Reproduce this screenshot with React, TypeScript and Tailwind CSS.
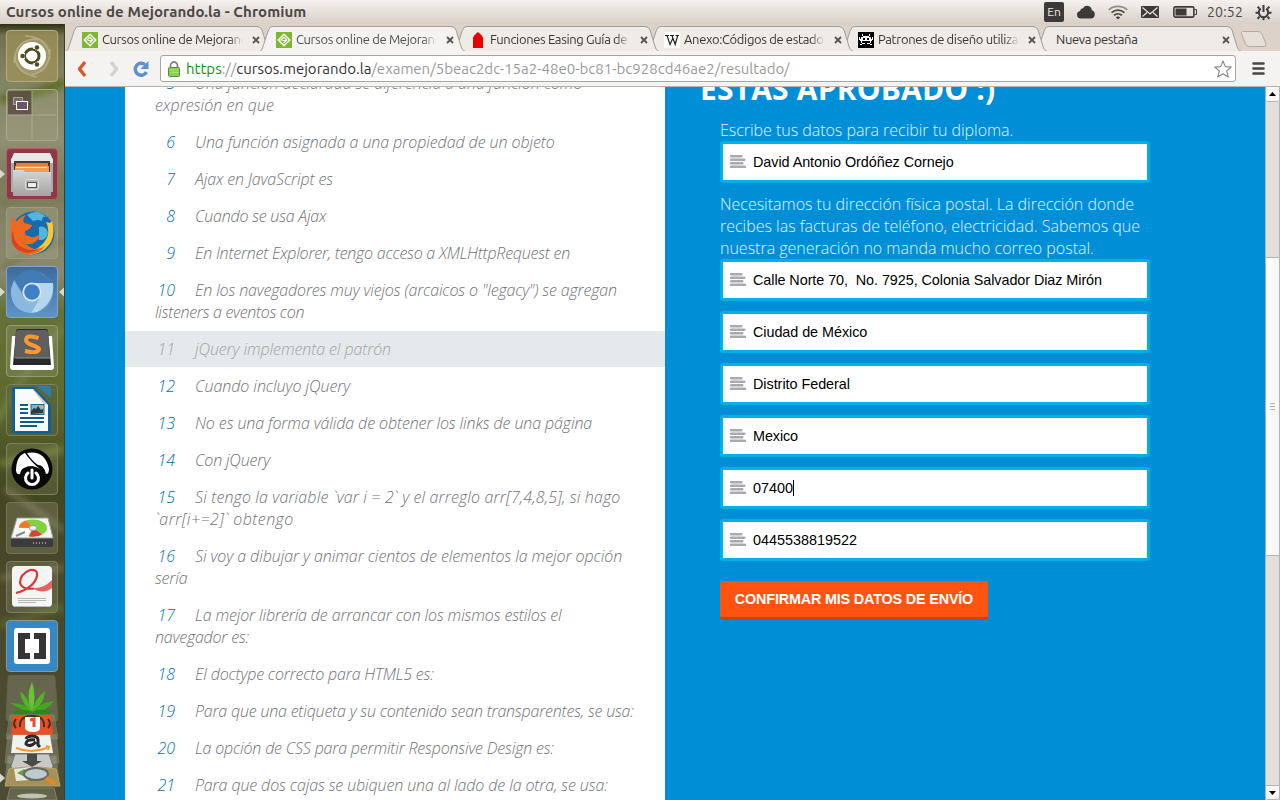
import type { ReactNode } from "react";

type Line = { text: string; spacing: string };

const questions: { n: number; lines: Line[]; muted?: boolean }[] = [
  {
    n: 5,
    lines: [
      { text: "Una función declarada se diferencia a una función como", spacing: "tracking-[-0.09px]" },
      { text: "expresión en que", spacing: "tracking-[0.05px]" },
    ],
  },
  { n: 6, lines: [{ text: "Una función asignada a una propiedad de un objeto", spacing: "tracking-[-0.08px]" }] },
  { n: 7, lines: [{ text: "Ajax en JavaScript es", spacing: "tracking-[-0.13px]" }] },
  { n: 8, lines: [{ text: "Cuando se usa Ajax", spacing: "tracking-[-0.22px]" }] },
  { n: 9, lines: [{ text: "En Internet Explorer, tengo acceso a XMLHttpRequest en", spacing: "tracking-[-0.24px]" }] },
  {
    n: 10,
    lines: [
      { text: 'En los navegadores muy viejos (arcaicos o "legacy") se agregan', spacing: "tracking-[-0.15px]" },
      { text: "listeners a eventos con", spacing: "tracking-[-0.3px]" },
    ],
  },
  { n: 11, lines: [{ text: "jQuery implementa el patrón", spacing: "tracking-[-0.1px]" }], muted: true },
  { n: 12, lines: [{ text: "Cuando incluyo jQuery", spacing: "tracking-[-0.05px]" }] },
  { n: 13, lines: [{ text: "No es una forma válida de obtener los links de una página", spacing: "tracking-[-0.11px]" }] },
  { n: 14, lines: [{ text: "Con jQuery", spacing: "tracking-[-0.18px]" }] },
  {
    n: 15,
    lines: [
      { text: "Si tengo la variable `var i = 2` y el arreglo arr[7,4,8,5], si hago", spacing: "tracking-[0.13px]" },
      { text: "`arr[i+=2]` obtengo", spacing: "tracking-[0.42px]" },
    ],
  },
  {
    n: 16,
    lines: [
      { text: "Si voy a dibujar y animar cientos de elementos la mejor opción", spacing: "tracking-[-0.08px]" },
      { text: "sería", spacing: "tracking-[-0.2px]" },
    ],
  },
  {
    n: 17,
    lines: [
      { text: "La mejor librería de arrancar con los mismos estilos el", spacing: "tracking-[-0.14px]" },
      { text: "navegador es:", spacing: "tracking-[-0.2px]" },
    ],
  },
  { n: 18, lines: [{ text: "El doctype correcto para HTML5 es:", spacing: "tracking-[-0.18px]" }] },
  { n: 19, lines: [{ text: "Para que una etiqueta y su contenido sean transparentes, se usa:", spacing: "tracking-[-0.2px]" }] },
  { n: 20, lines: [{ text: "La opción de CSS para permitir Responsive Design es:", spacing: "tracking-[-0.19px]" }] },
  { n: 21, lines: [{ text: "Para que dos cajas se ubiquen una al lado de la otra, se usa:", spacing: "tracking-[-0.12px]" }] },
];

function TopBar() {
  return (
    <header className="flex h-6 shrink-0 items-center justify-between bg-linear-to-b from-[#f4f2ef] to-[#d9cfc6] pr-[8px] pl-[6px] text-[#4b4845]">
      <h1 className="text-[15px] leading-6 font-bold tracking-[0.1px] whitespace-nowrap">
        Cursos online de Mejorando.la - Chromium
      </h1>
      <div className="flex items-center">
        <span className="flex h-5 w-5 items-center justify-center rounded-[2px] bg-[#3c3b39] text-[12px] leading-5 text-[#eeeae6]">En</span>
        <svg className="ml-[13px]" width="18" height="14" viewBox="0 0 18 14" fill="#3c3b39">
          <path d="M4 13.5a3.800 3.800 0 0 1-1-7.500A3.400 3.400 0 0 1 6 3.200 4.700 4.700 0 0 1 14.800 5.300 4.200 4.200 0 0 1 14 13.5Z" />
        </svg>
        <svg className="ml-[13px]" width="20" height="15" viewBox="0 0 20 15" fill="none" strokeWidth="1.700">
          <path d="M.8 4.800C5.500.2 14.500.2 19.200 4.800" stroke="#8e8a86" />
          <path d="M3.500 7.700C7.200 4.300 12.800 4.300 16.500 7.700" stroke="#4b4845" />
          <path d="M6 10.300C8.300 8.300 11.700 8.300 14 10.300" stroke="#4b4845" />
          <path d="M7.800 12.200 10 14.500l2.200-2.300Q10 10.800 7.800 12.200Z" fill="#3c3b39" />
        </svg>
        <svg className="ml-[13px]" width="18" height="12" viewBox="0 0 18 12">
          <rect width="18" height="12" rx="0.8" fill="#3c3b39" />
          <path d="M1.500 1.500 9 8l7.500-6.500M1.500 10.500l4.500-4M16.500 10.500l-4.500-4" fill="none" stroke="#e8e4df" strokeWidth="1.200" />
        </svg>
        <svg className="ml-[14px]" width="24" height="12" viewBox="0 0 24 12">
          <rect x="0.9" y="0.9" width="20" height="10.200" rx="1.500" fill="none" stroke="#3c3b39" strokeWidth="1.600" />
          <rect x="2.500" y="2.500" width="11" height="7" fill="#3c3b39" />
          <path d="M21.500 3.500h2v5h-2" fill="none" stroke="#3c3b39" />
        </svg>
        <span className="ml-[10px] w-[36px] text-[14px] leading-6 tracking-[0.2px] whitespace-nowrap">20:52</span>
        <svg className="ml-[12px]" width="17" height="17" viewBox="0 0 17 17" fill="none" stroke="#3c3b39">
          <path d="M5.800 4.600A4.700 4.700 0 1 0 11.200 4.600" strokeWidth="2" />
          <path d="M8.500 1v7" strokeWidth="2" />
          <path d="M2.600 2.700l1.900 1.900M14.400 2.700l-1.900 1.900M.5 8.800h2.500M14 8.800h2.500M2.600 14.700l1.900-1.900M14.400 14.700l-1.900-1.900M8.500 13.800v2.500" strokeWidth="2" />
        </svg>
      </div>
    </header>
  );
}

function Tile({ className, children }: { className: string; children: ReactNode }) {
  return (
    <div className={`z-1 flex h-[52px] w-[52px] shrink-0 items-center justify-center rounded-[4px] border ${className}`}>
      <svg width="50" height="50" viewBox="0 0 50 50">{children}</svg>
    </div>
  );
}

function Launcher() {
  return (
    <nav className="relative flex w-[65px] shrink-0 flex-col items-start gap-[7px] overflow-hidden border-r border-[#3d3f25] bg-[#5d6338] pt-[6px] pl-[6px]">
      <svg className="absolute inset-0" width="64" height="776" viewBox="0 0 64 776">
        <defs>
          <linearGradient id="wall" x1="0" y1="0" x2="0" y2="1">
            <stop offset="0" stopColor="#2e3016" />
            <stop offset=".015" stopColor="#70734f" />
            <stop offset=".06" stopColor="#7f8160" />
            <stop offset=".15" stopColor="#8e8f74" />
            <stop offset=".2" stopColor="#7c7c5b" />
            <stop offset=".32" stopColor="#8b8a6f" />
            <stop offset=".37" stopColor="#66713a" />
            <stop offset=".48" stopColor="#5d6a2d" />
            <stop offset=".6" stopColor="#434721" />
            <stop offset=".7" stopColor="#48482a" />
            <stop offset="1" stopColor="#4c4c33" />
          </linearGradient>
          <linearGradient id="silver" x1="0" y1="0" x2="0" y2="1">
            <stop offset="0" stopColor="#d6d6d5" />
            <stop offset="1" stopColor="#a3a3a2" />
          </linearGradient>
          <filter id="soft"><feGaussianBlur stdDeviation="3" /></filter>
        </defs>
        <rect width="64" height="776" fill="url(#wall)" />
        <g filter="url(#soft)" fill="none">
          <path d="M0 75Q35 72 64 58" stroke="#596b1d" strokeWidth="8" />
          <path d="M0 180Q30 165 64 174M0 245Q30 225 64 217" stroke="#77764f" strokeWidth="5" />
          <path d="M-5 400Q35 330 64 305M0 440L64 425" stroke="#72803f" strokeWidth="6" />
          <path d="M5 465Q35 484 64 507M0 554L64 544" stroke="#7b795a" strokeWidth="4" />
          <path d="M0 601L64 583" stroke="#5a692f" strokeWidth="7" />
        </g>
      </svg>

      <Tile className="border-[#b6ac7b] bg-[#a1935a]/70">
        <path d="M7 30Q8 8 29 7Q45 9 43 28Q40 44 22 43Q9 40 7 30" fill="#b8b087" opacity=".35" />
        <path d="M7 32Q8 8 30 8M18 5Q42 6 43 28M43 18Q43 40 24 44M30 46Q8 42 8 24" fill="none" stroke="#c4bd98" strokeWidth="1.500" opacity=".6" />
        <circle cx="25" cy="25" r="14" fill="#fff" />
        <circle cx="25" cy="25" r="7" fill="none" stroke="#4e4b21" strokeWidth="3" />
        <path d="M16 25h4M28.500 19l2-4M28.500 31l2 4" stroke="#fff" strokeWidth="6" />
        <circle cx="15.500" cy="25" r="2.200" fill="#4e4b21" />
        <circle cx="30" cy="16.500" r="2.200" fill="#4e4b21" />
        <circle cx="30" cy="33.500" r="2.200" fill="#4e4b21" />
        <circle cx="25" cy="25" r="6.800" fill="none" stroke="#4e4b21" strokeWidth="1.600" />
      </Tile>
      <Tile className="border-[#aaa98b] bg-[#bbb98f]/20">
        <rect x="1" y="1" width="24" height="24" fill="#594740" opacity=".8" />
        <path d="M25 1v48M1 25h48" stroke="#a8ad8d" />
        <rect x="6.500" y="7.500" width="9" height="7" fill="#786a68" stroke="#aaa29f" />
        <rect x="9.500" y="11.500" width="11" height="8" fill="#6d5664" stroke="#fff" />
      </Tile>
      <Tile className="border-[#b35f6b] bg-[#8c3a48]">
        <path d="M4 9h42v34H4z" fill="#a9aaa9" />
        <path d="M7 4h36l3 7v3H4v-3z" fill="#e8e8e6" />
        <path d="M7 12h36v12H7z" fill="#4c3832" />
        <path d="M9 14h32v3H9z" fill="#e77e30" />
        <path d="M8 17h34v6H8z" fill="#f19b55" />
        <path d="M9 18.500h31" stroke="#ffe8c8" />
        <path d="M6 21h10l2 2h26v24H6z" fill="url(#silver)" />
        <rect x="18.500" y="30.500" width="13" height="10" rx="2" fill="#b5b5b5" stroke="#e2e2e2" />
        <rect x="20.500" y="33.500" width="9" height="5" fill="#eee" stroke="#555" />
      </Tile>
      <Tile className="border-[#9e9b83] bg-[#b9b69a]/25">
        <circle cx="26" cy="25" r="21.500" fill="#176bac" />
        <path d="M20 7q10-7 19 2-4-1-4 4-4-2-9 0zM32 19q7-2 9 6-2 8-9 7z" fill="#51b5dd" />
        <path d="M45 13Q50 31 38 41 26 50 16 44q19-1 25-17 1-8-2-13 5 2 6-1z" fill="#ffc631" />
        <path d="M4 13q0-3 2-5 0 5 4 5 4-5 9-6-4 4-2 8l8 2q-1 4-7 6-1 5 4 5 5 3 9-1 4 2-2 6-4 4-10 3 9 9 19 2-7 10-19 8Q0 42 4 13z" fill="#ee6922" />
        <path d="M6 22q0 15 13 19 9 3 15-3-9 10-21 5Q1 37 6 22z" fill="#d9441f" />
      </Tile>
      <Tile className="border-[#7da7d0] bg-linear-to-b from-[#3e6b9c] to-[#5f93c8]">
        <circle cx="25" cy="25" r="21" fill="#6a9dcf" />
        <path d="M7 13Q24-9 45 16H25q-8 0-10 9z" fill="#437cb4" />
        <path d="M25 16h21Q48 36 30 45L24 46l9-16z" fill="#b5d6ef" />
        <path d="M7 13L16 29Q22 36 31 33L24 46Q3 44 4 22z" fill="#8cb8e0" />
        <circle cx="25" cy="25" r="9.500" fill="#dce9f5" />
        <circle cx="25" cy="25" r="7.800" fill="#3f7fc5" />
      </Tile>
      <Tile className="border-[#959975] bg-[#b2b291]/20">
        <path d="M5 10h40l2 31q0 3-3 3H6q-3 0-3-3z" fill="#fff" />
        <path d="M6 39L9 5q0-2 2-2h28q2 0 2 2l3 34z" fill="#272829" />
        <path d="M11 4h28q2 0 2 2l2 26H7L9 6q0-2 2-2z" fill="#5f5f60" />
        <path d="M8 32h35" stroke="#929292" />
        <path d="M31.500 12q-12-4-12.500 2 0 3 6 5t7 4q-1 5-14 2" fill="none" stroke="#ff982e" strokeWidth="4" />
      </Tile>
      <Tile className="border-[#78815f] bg-[#596140]/50">
        <path d="M6 2h21l17 18v27q0 1-1 1H6q-1 0-1-1V3z" fill="#0e6295" />
        <path d="M8 4h18l15 16v26H8z" fill="#fafafa" />
        <path d="M26 4v1l11 14 4 1z" fill="#c8c8c8" />
        <path d="M29 1h13q2 0 2 2v10z" fill="#2f7baa" />
        <path d="M13 20h8M13 24h8M13 28h8M13 33h24M13 37h24M13 41h17" stroke="#125b84" strokeWidth="2" />
        <rect x="24" y="19.500" width="13" height="10" fill="#78b5dc" stroke="#206a92" />
        <path d="M24 29v-3l3-3 2 1 2-3 3 4 2-1v4z" fill="#34383b" />
        <circle cx="35" cy="22" r="1.500" fill="#e4b740" />
      </Tile>
      <Tile className="border-[#7f8058] bg-[#9ba07b]/20">
        <circle cx="25" cy="25" r="20.500" fill="#080808" />
        <path d="M9 27Q9 12 18 9q6 9 16 17-9-7-17-2-3 1-4 6-3 1-4-3zM20 9q18-3 22 16 0 5-3 5-2-9-8-9-6-4-11-12z" fill="#fff" />
        <path d="M21 29a6.500 6.500 0 1 0 8 0M25 26v8" fill="none" stroke="#fff" strokeWidth="3" strokeLinecap="round" />
      </Tile>
      <Tile className="border-[#73745a] bg-[#a7a68d]/25">
        <path d="M4 35h42v7q0 2-2 2H6q-2 0-2-2z" fill="#3b3b3c" />
        <path d="M10 15h31l5 20H4z" fill="#f4f4f3" stroke="#9c9c9c" />
        <ellipse cx="26" cy="25" rx="14" ry="8.500" fill="#80d33c" />
        <path d="M26 25L19 17.500q-7 2-7 7z" fill="#ee7a28" />
        <path d="M26 25h-14q0 6 9 8z" fill="#fff" />
        <path d="M26 25l9 6.500q-5 3-13 2z" fill="#dd3f35" />
        <ellipse cx="26" cy="25" rx="4" ry="2.500" fill="#eee" stroke="#999" />
        <path d="M9 33l9-4" stroke="#888" strokeWidth="2" />
        <path d="M26 40h14" stroke="#999" strokeWidth="2" strokeDasharray="1 2" />
      </Tile>
      <Tile className="border-[#7b7e5c] bg-[#9fa485]/25">
        <rect x="5" y="4" width="40" height="41" rx="4" fill="#f5f5f4" />
        <path d="M7 44.500h36" stroke="#bbb" />
        <path d="M26 26Q36 27 45 18v8Q36 33 25 26z" fill="#e86464" />
        <path d="M9 31Q27 26 30 14Q31 7 23 8Q13 12 13 21Q15 28 27 26.500" fill="none" stroke="#dc3637" strokeWidth="2.200" />
        <path d="M11 36.500h28M11 38.500h28M11 40.500h18" stroke="#b7b7b6" />
      </Tile>
      <Tile className="border-[#8e9b8c] bg-[#3683c1]">
        <rect x="1" y="0" width="48" height="49" rx="3" fill="#3588c8" />
        <rect x="7" y="7" width="36" height="36" rx="3" fill="#fff" />
        <path d="M11 12h12v6h-5v14h5v6H11zM27 12h12v26H27v-6h5V18h-5z" fill="#353535" />
      </Tile>
      <svg className="z-1 -mt-[4px] -ml-[6px] shrink-0" width="64" height="125" viewBox="0 0 64 125">
        <path d="M10 0h42q3 0 3 3l3 40q0 3-3 3H9q-3 0-3-3L8 3q0-3 2-3z" fill="#a8a997" opacity=".3" stroke="#999978" />
        <path d="M32 7q5 14 0 30-7-15 0-30" fill="#69c433" />
        <path d="M20 16q9 7 12 21-11-8-12-21M45 16q-1 14-13 21 2-12 13-21" fill="#51b52a" />
        <path d="M10 28q14-1 22 9-12-2-22-9M54 26q-7 11-22 11 8-10 22-11" fill="#43a720" />
        <path d="M12 38q10-6 20-1-9 5-20 1M52 38q-10-6-20-1 9 5 20 1" fill="#2d8915" />
        <path d="M10 40h44l4 24H6z" fill="#8e9180" opacity=".45" stroke="#999b88" />
        <path d="M13 40h38l2 20H11z" fill="#e85127" />
        <path d="M20 52q-1-11 12-11t12 11M16 44q-4 5 0 9M48 44q4 5 0 9" fill="none" stroke="#4a2b22" strokeWidth="2" />
        <path d="M25 42h15v11q0 4-7 4t-8-4z" fill="#fff" />
        <path d="M30 45l4-1v8" fill="none" stroke="#e85127" strokeWidth="3" />
        <path d="M8 60h48l3 28H5z" fill="#a1a18f" opacity=".4" stroke="#a7a795" />
        <path d="M13 60h37l3 18H11z" fill="#f0f0ee" />
        <path d="M26 64q1-3 6-3 6 0 6 4v5l2 2M35 65q-9-1-9 4 4 4 10-2" fill="none" stroke="#292929" strokeWidth="3" />
        <path d="M16 73q15 6 31 0M46 71l3 1-1 3" stroke="#f19a2b" strokeWidth="2" fill="none" />
        <path d="M8 81h48l3 24H5z" fill="#b6b6a5" opacity=".4" stroke="#a3a38e" />
        <path d="M15 79h34l4 12q-1 5-6 5H17q-5 0-6-5z" fill="#c9c9c7" stroke="#777" />
        <path d="M27 79h10v7h5l-10 6-10-6h5z" fill="#4a4a49" />
        <path d="M9 94q23-4 47 0l4 17H5z" fill="#a49259" stroke="#b6a36b" />
        <path d="M14 94l17-2 12 12-27 2z" fill="#e4e7db" />
        <path d="M17 98l7-4 6 4-5 4z" fill="#6b9f47" />
        <ellipse cx="36" cy="99" rx="12" ry="6" fill="#bbcbd0" stroke="#65665e" strokeWidth="2" />
        <path d="M46 103l9 6" stroke="#e18828" strokeWidth="4" />
        <path d="M10 113h44l3 12H7z" fill="#6e6f57" opacity=".7" stroke="#9c9d84" />
        <ellipse cx="32" cy="121" rx="15" ry="2.500" fill="#c1c2b4" />
      </svg>
      <svg className="absolute inset-0 z-2" width="64" height="776" viewBox="0 0 64 776" fill="#d8d7cf">
        <path d="M0 145.500l5 4.500-5 4.500zM0 263.500l5 4.500-5 4.500zM64 263.500l-5 4.500 5 4.500zM0 749.500l5 4.500-5 4.500z" />
      </svg>
    </nav>
  );
}

const green = (
  <svg width="16" height="16" viewBox="0 0 16 16">
    <rect width="16" height="16" fill="#7fb735" />
    <path d="M8 2.200 13.800 8 8 13.800 2.200 8Z" fill="none" stroke="#fff" strokeWidth="1.300" />
    <path d="M7.500 4.800 10.700 8 7.500 11.200M4.500 8.500 7.500 5.500M6 8.500h4" fill="none" stroke="#fff" strokeWidth="1.200" />
  </svg>
);

const tabs: { title: string; icon?: ReactNode; z: string; active?: boolean }[] = [
  { title: "Cursos online de Mejorando.la", icon: green, z: "z-5" },
  { title: "Cursos online de Mejorando.la", icon: green, z: "z-10", active: true },
  {
    title: "Funciones Easing Guía de",
    z: "z-4",
    icon: (
      <svg width="16" height="16" viewBox="0 0 16 16">
        <path d="M8 0Q12.500 3.500 13 6V16H3V6Q3.500 3.500 8 0Z" fill="#ea0000" />
      </svg>
    ),
  },
  {
    title: "Anexo:Códigos de estado",
    z: "z-3",
    icon: (
      <svg width="16" height="16" viewBox="0 0 16 16">
        <rect width="16" height="16" rx="2" fill="#fff" />
        <path d="M1 3.500h4M6 3.500h4M11.500 3.500h3.500M3 3.500 6 12.500 8.800 6.500M8 3.500l3.200 9 2.500-9" fill="none" stroke="#222" strokeWidth="1.200" />
      </svg>
    ),
  },
  {
    title: "Patrones de diseño utilizados",
    z: "z-2",
    icon: (
      <svg width="16" height="16" viewBox="0 0 16 16">
        <rect width="16" height="16" fill="#000" />
        <path d="M4 2h1v2H4zM11 2h1v2h-1zM5 4h6v1H5zM3 5h10v2h1v2h-1v2h-1V9H4v2H3V9H2V7h1zM5 6v2h2V6zM9 6v2h2V6zM1 5h1v3H1zM14 5h1v3h-1zM4 11h3v1H4zM9 11h3v1H9zM2 12h2v1H2zM12 12h2v1h-2z" fill="#fff" fillRule="evenodd" />
      </svg>
    ),
  },
  { title: "Nueva pestaña", z: "z-1" },
];

function TabStrip() {
  return (
    <div className="flex h-[27px] shrink-0 bg-[#dcd2ca] pl-[3px]">
      {tabs.map((tab, i) => (
        <div key={i} className={`relative flex w-[194px] shrink-0 items-center pl-[14px] ${tab.z}`}>
          <svg className="absolute top-0 left-[-3px]" width="208" height="28" viewBox="0 0 208 28">
            <path
              d="M.5 27.500Q2.500 27 3.500 24L9.500 6Q10.500 2.500 14 2.500H192Q195.500 2.500 197 6L202.500 24Q204 27 206.500 27.500"
              fill={tab.active ? "#f4f3f2" : "#efebe7"}
              stroke="#a39e9a"
            />
            {tab.active ? <path d="M2 27.500H205" stroke="#f4f3f2" /> : <path d="M0 27.500H208" stroke="#a39e9a" />}
          </svg>
          {tab.icon && <span className="relative mt-[5px] mr-1 w-4 shrink-0">{tab.icon}</span>}
          <span
            className={`relative mt-[3px] h-6 overflow-hidden text-[13px] leading-[25px] tracking-[-0.36px] whitespace-nowrap ${
              tab.active ? "text-[#55504c]" : "text-[#3b3632]"
            } ${tab.icon ? "w-[141px] mask-r-from-90% mask-r-to-100%" : "ml-[4px] w-[157px]"}`}
          >
            {tab.title}
          </span>
          <svg className="relative mt-[5px] ml-[9px]" width="8" height="8" viewBox="0 0 8 8">
            <path d="M1 1l6 6M7 1 1 7" stroke="#575350" strokeWidth="1.800" />
          </svg>
        </div>
      ))}
      <svg className="ml-[7px] shrink-0" width="30" height="27" viewBox="0 0 30 27">
        <path d="M3.500 7.500H19Q22 7.500 23 10L27 20Q28 22.500 25 22.500H10Q7.500 22.500 6.500 20L2.500 10Q1.500 7.500 3.500 7.500Z" fill="#e6dfd8" stroke="#b5aba2" />
      </svg>
    </div>
  );
}

function Toolbar() {
  return (
    <div className="relative z-20 flex h-[36px] shrink-0 items-center border-b border-[#b6b2af] bg-[#f4f3f2] pl-[11px]">
      <svg width="12" height="18" viewBox="0 0 12 18">
        <path d="M9 2 3.500 9 9 16" fill="none" stroke="#df552a" strokeWidth="3.400" strokeLinejoin="round" />
      </svg>
      <svg className="ml-[20px]" width="12" height="18" viewBox="0 0 12 18">
        <path d="M3 2 8.500 9 3 16" fill="none" stroke="#d4d2d0" strokeWidth="3.400" />
      </svg>
      <svg className="ml-[12px]" width="18" height="18" viewBox="0 0 18 18">
        <path d="M14.500 12.200A6 6 0 1 1 13 4.500" fill="none" stroke="#5a91ce" strokeWidth="3.400" />
        <path d="M16.500 1v8H8.500Z" fill="#5a91ce" />
      </svg>
      <div className="ml-[10px] flex h-[27px] w-[1076px] items-center rounded-[3px] border border-[#aaa5a0] bg-white pl-[7px]">
        <svg className="shrink-0" width="12" height="16" viewBox="0 0 12 16">
          <path d="M2.500 8V4.500a3.500 3.500 0 0 1 7 0V8" fill="none" stroke="#858585" strokeWidth="1.800" />
          <rect x=".5" y="6.500" width="11" height="9" rx="1" fill="#8bcf55" stroke="#51932c" />
          <path d="M2 9h8M2 11.500h8" stroke="#a9e07a" />
        </svg>
        <span className="ml-[6px] flex-1 text-[15px] leading-6 tracking-[0px] whitespace-nowrap text-[#9a9a9a]">
          <span className="text-[#0b9410]">https</span>://<span className="text-[#33302e]">cursos.mejorando.la</span>/examen/5beac2dc-15a2-48e0-bc81-bc928cd46ae2/resultado/
        </span>
        <svg className="mr-[3px]" width="18" height="18" viewBox="0 0 18 18">
          <path d="M9 .9 11.300 6.600 17.300 7 12.700 10.900 14.200 17 9 13.700 3.800 17 5.300 10.900.7 7 6.700 6.600Z" fill="#fff" stroke="#858585" strokeWidth="1.100" strokeLinejoin="round" />
        </svg>
      </div>
      <svg className="ml-[16px]" width="13" height="13" viewBox="0 0 13 13">
        <path d="M1.500 1.500h10M1.500 6.500h10M1.500 11.500h10" stroke="#484645" strokeWidth="2.600" strokeLinecap="round" />
      </svg>
    </div>
  );
}

function Field({ value, caret, spacing = "tracking-[0px]" }: { value: string; caret?: boolean; spacing?: string }) {
  return (
    <div className="flex h-[42px] w-[430px] items-center rounded-[3px] border-3 border-[#00b1e3] bg-white pl-[7px]">
      <svg className="mb-px shrink-0" width="16" height="13" viewBox="0 0 16 13">
        <path d="M1 1.200h10.300M1 4.800h13.300M1 8.300h11.300M1 11.800h14" stroke="#aaa9ad" strokeWidth="2.500" strokeLinecap="round" />
      </svg>
      <span className={`ml-[7px] font-['Liberation_Sans',sans-serif] text-[14.4px] leading-5 whitespace-pre text-black ${spacing}`}>{value}</span>
      {caret && <span className="h-4 w-px bg-black" />}
    </div>
  );
}

function Scrollbar() {
  return (
    <div className="flex w-[15px] shrink-0 flex-col border-x border-[#b5b1ae] bg-[#e3dfda]">
      <div className="flex h-[15px] items-center justify-center rounded-[2px] border-b border-[#b5b1ae] bg-[#fbf8f4]">
        <svg width="7" height="4" viewBox="0 0 7 4"><path d="M3.500 0 7 4H0Z" /></svg>
      </div>
      <div className="mt-[155px] flex h-[299px] flex-col items-center justify-center gap-[2px] border-y border-[#b5b1ae] bg-linear-to-r from-white from-50% to-[#f8f8f8] to-50%">
        <span className="h-px w-[5px] bg-[#b5b1ae]" />
        <span className="h-px w-[5px] bg-[#b5b1ae]" />
        <span className="h-px w-[5px] bg-[#b5b1ae]" />
      </div>
      <div className="mt-auto flex h-[15px] items-center justify-center rounded-b-[2px] border-y border-[#b5b1ae] bg-[#fbf8f4]">
        <svg width="7" height="4" viewBox="0 0 7 4"><path d="M3.500 4 7 0H0Z" /></svg>
      </div>
    </div>
  );
}

export default function App() {
  return (
    <div className="flex h-[800px] w-[1280px] flex-col overflow-hidden font-['Ubuntu','Noto_Sans',sans-serif]">
      <TopBar />
      <div className="flex min-h-0 flex-1">
        <Launcher />
        <section className="flex min-w-0 flex-1 flex-col">
          <TabStrip />
          <Toolbar />
          <div className="flex min-h-0 flex-1 overflow-hidden bg-[#008fd7] font-['Open_Sans',sans-serif] text-[16px] leading-[22px] font-light">
            <ol className="-mt-[22px] ml-[60px] flex w-[540px] shrink-0 flex-col gap-px self-start bg-white">
              {questions.map((q) => (
                <li
                  key={q.n}
                  className={`px-[30px] py-[7px] whitespace-nowrap italic ${q.muted ? "bg-[#e4e9eb] text-[#a2a4a5]" : "text-[#707274]"}`}
                >
                  <span className={`mr-5 inline-block w-5 text-right tracking-[0px] ${q.muted ? "text-[#a2a4a5]" : "text-[#0070b0]"}`}>{q.n}</span>
                  {q.lines.map((line, i) => (
                    <span key={i} className={line.spacing}>
                      {i > 0 && <br />}
                      {line.text}
                    </span>
                  ))}
                </li>
              ))}
            </ol>
            <form className="ml-[35px] flex-1 overflow-hidden text-[#e2f3fb]">
              <h2 className="-mt-[18px] h-[50px] text-[30px] leading-[40px] font-bold tracking-[0.18px] whitespace-nowrap text-white">ESTÁS APROBADO :)</h2>
              <div className="pl-[20px]">
                <p className="tracking-[-0.03px] whitespace-nowrap">Escribe tus datos para recibir tu diploma.</p>
                <Field value="David Antonio Ordóñez Cornejo" spacing="tracking-[-0.06px]" />
                <p className="mt-[10px] tracking-[-0.01px] whitespace-nowrap">
                  Necesitamos tu dirección física postal. La dirección donde<br />
                  recibes las facturas de teléfono, electricidad. Sabemos que<br />
                  nuestra generación no manda mucho correo postal.
                </p>
                <div className="flex flex-col gap-[10px]">
                  <Field value="Calle Norte 70,  No. 7925, Colonia Salvador Diaz Mirón" spacing="tracking-[-0.07px]" />
                  <Field value="Ciudad de México" spacing="tracking-[-0.06px]" />
                  <Field value="Distrito Federal" spacing="tracking-[-0.04px]" />
                  <Field value="Mexico" spacing="tracking-[-0.1px]" />
                  <Field value="07400" caret />
                  <Field value="0445538819522" />
                </div>
                <button
                  type="button"
                  className="mt-5 flex h-[39px] w-[268px] items-center justify-center rounded-[3px] border-b-3 border-[#cf420d] bg-[#ff5310] font-['Liberation_Sans',sans-serif] text-[14.4px] leading-5 font-bold tracking-[-0.18px] whitespace-nowrap text-white"
                >
                  CONFIRMAR MIS DATOS DE ENVÍO
                </button>
              </div>
            </form>
            <Scrollbar />
          </div>
        </section>
      </div>
    </div>
  );
}
